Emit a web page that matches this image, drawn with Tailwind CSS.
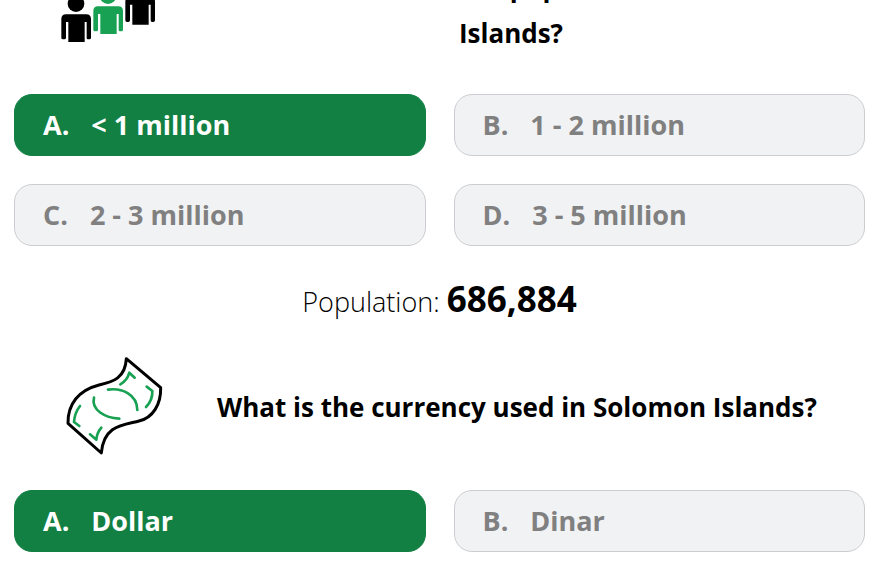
<!DOCTYPE html>
<html lang="en">
<head>
    <meta charset="UTF-8">
    <meta name="viewport" content="width=device-width, initial-scale=1.0">
    <title>Solomon Islands Quiz</title>
    <script src="https://cdn.jsdelivr.net/npm/@tailwindcss/browser@4"></script>
</head>
<body class="bg-white text-black font-['Open_Sans','Noto_Sans',sans-serif] overflow-x-hidden">
    <main class="-mt-16 pl-[14px] pr-[9px] pb-4">
        <!-- Population question -->
        <section>
            <div class="flex items-end pl-[35px] pr-3">
                <svg class="size-[120px] shrink-0" viewBox="-3 -192 360 360" aria-hidden="true">
                    <g id="person">
                        <circle cx="78" cy="11" r="25"/>
                        <path d="M48 43h61q14 0 14 14v56q0 5-5 5h-4q-4 0-4-5V66h-6v60H55V66h-7v47q0 5-5 5h-4q-5 0-5-5V57q0-14 14-14z"/>
                    </g>
                    <use href="#person" x="96" y="-24" fill="#18a152"/>
                    <use href="#person" x="192" y="-52"/>
                </svg>
                <h2 class="flex-1 text-center text-[26px] leading-[46px] font-bold">What is the estimated population of Solomon Islands?</h2>
            </div>
            <div class="mt-[38px] grid grid-cols-2 gap-7">
                <button class="h-[62px] px-7 flex items-center gap-[22px] rounded-[18px] border border-[#127f43] bg-[#127f43] text-white text-[27px] font-bold"><span>A.</span><span>&lt; 1 million</span></button>
                <button class="h-[62px] px-7 flex items-center gap-[22px] rounded-[18px] border border-[#cccdd1] bg-[#f1f2f4] text-[#808080] text-[27px] font-bold"><span>B.</span><span>1 - 2 million</span></button>
                <button class="h-[62px] px-7 flex items-center gap-[22px] rounded-[18px] border border-[#cccdd1] bg-[#f1f2f4] text-[#808080] text-[27px] font-bold"><span>C.</span><span>2 - 3 million</span></button>
                <button class="h-[62px] px-7 flex items-center gap-[22px] rounded-[18px] border border-[#cccdd1] bg-[#f1f2f4] text-[#808080] text-[27px] font-bold"><span>D.</span><span>3 - 5 million</span></button>
            </div>
            <p class="pt-7 pb-[18px] text-center text-[27px] leading-[50px] font-light">Population: <strong class="text-[35px] font-bold">686,884</strong></p>
        </section>

        <!-- Currency question -->
        <section>
            <div class="flex items-center pl-[35px]">
                <svg class="size-[120px] shrink-0" viewBox="-18 0 360 360" fill="none" stroke-width="9" stroke-linecap="round" stroke-linejoin="round" aria-hidden="true">
                    <path stroke="#000" d="M214 41L317 128C318 178 294 218 252 228C205 240 146 240 139 324L39 235C38 178 70 136 132 120C175 110 211 99 214 41z"/>
                    <g stroke="#18a152" stroke-width="8">
                        <path d="M159 134C200 128 246 148 247 195"/>
                        <path d="M117 158C108 195 150 219 193 221"/>
                        <path d="M196 118Q217 106 223 83L239 98"/>
                        <path d="M275 125L292 138Q293 166 273 186"/>
                        <path d="M75 183Q59 203 57 231L73 243"/>
                        <path d="M105 268L124 284Q126 263 139 248"/>
                    </g>
                </svg>
                <h2 class="flex-1 pt-1 text-center text-[26px] leading-[46px] font-bold">What is the currency used in Solomon Islands?</h2>
            </div>
            <div class="mt-[25px] grid grid-cols-2 gap-7">
                <button class="h-[62px] px-7 flex items-center gap-[22px] rounded-[18px] border border-[#127f43] bg-[#127f43] text-white text-[27px] font-bold"><span>A.</span><span>Dollar</span></button>
                <button class="h-[62px] px-7 flex items-center gap-[22px] rounded-[18px] border border-[#cccdd1] bg-[#f1f2f4] text-[#808080] text-[27px] font-bold"><span>B.</span><span>Dinar</span></button>
            </div>
        </section>
    </main>
</body>
</html>
